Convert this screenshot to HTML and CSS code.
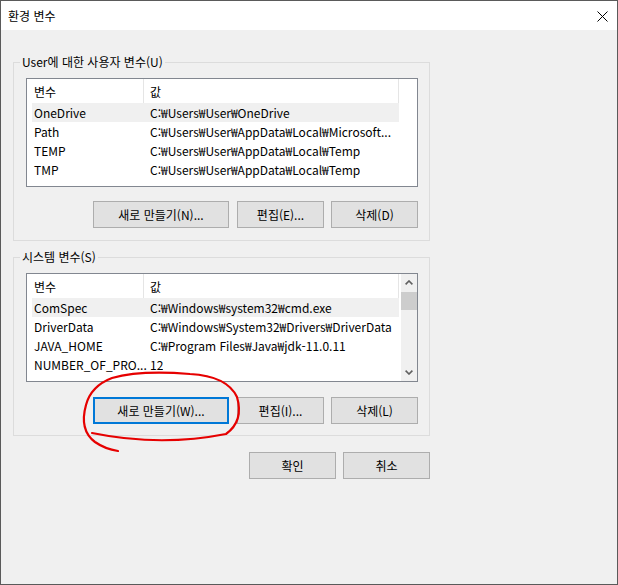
FILE: index.html
```html
<!DOCTYPE html>
<html lang="ko">
<head>
<meta charset="utf-8">
<title>환경 변수</title>
<link rel="stylesheet" href="styles.css">
</head>
<body>
<div class="window">
  <div class="titlebar">
    <span class="title">환경 변수</span>
    <svg class="close" width="11" height="11" viewBox="0 0 11 11" aria-label="닫기"><path d="M0.5 0.5 L10.5 10.5 M10.5 0.5 L0.5 10.5" stroke="#000" stroke-width="1" fill="none"/></svg>
  </div>
  <div class="content">
    <fieldset class="group group-user">
      <legend>User에 대한 사용자 변수(U)</legend>
      <div class="list">
        <div class="list-body">
          <div class="list-header">
            <div class="hcell hname">변수</div>
            <div class="hcell hvalue">값</div>
          </div>
          <div class="row selected"><span class="name">OneDrive</span><span class="value">C:₩Users₩User₩OneDrive</span></div>
          <div class="row"><span class="name">Path</span><span class="value">C:₩Users₩User₩AppData₩Local₩Microsoft...</span></div>
          <div class="row"><span class="name">TEMP</span><span class="value">C:₩Users₩User₩AppData₩Local₩Temp</span></div>
          <div class="row"><span class="name">TMP</span><span class="value">C:₩Users₩User₩AppData₩Local₩Temp</span></div>
        </div>
      </div>
      <div class="actions">
        <button class="btn btn-wide">새로 만들기(N)...</button>
        <button class="btn">편집(E)...</button>
        <button class="btn">삭제(D)</button>
      </div>
    </fieldset>

    <fieldset class="group group-sys">
      <legend>시스템 변수(S)</legend>
      <div class="list">
        <div class="list-body">
          <div class="list-header">
            <div class="hcell hname">변수</div>
            <div class="hcell hvalue">값</div>
          </div>
          <div class="row selected"><span class="name">ComSpec</span><span class="value">C:₩Windows₩system32₩cmd.exe</span></div>
          <div class="row"><span class="name">DriverData</span><span class="value">C:₩Windows₩System32₩Drivers₩DriverData</span></div>
          <div class="row"><span class="name">JAVA_HOME</span><span class="value">C:₩Program Files₩Java₩jdk-11.0.11</span></div>
          <div class="row"><span class="name">NUMBER_OF_PRO...</span><span class="value">12</span></div>
        </div>
        <div class="scrollbar">
          <div class="arrow"><svg width="8" height="5" viewBox="0 0 8 5"><path d="M0.6 4.4 L4 1 L7.4 4.4" stroke="#606060" stroke-width="1.6" fill="none"/></svg></div>
          <div class="thumb"></div>
          <div class="arrow arrow-down"><svg width="8" height="5" viewBox="0 0 8 5"><path d="M0.6 0.6 L4 4 L7.4 0.6" stroke="#606060" stroke-width="1.6" fill="none"/></svg></div>
        </div>
      </div>
      <div class="actions">
        <button class="btn btn-wide btn-default">새로 만들기(W)...</button>
        <button class="btn">편집(I)...</button>
        <button class="btn">삭제(L)</button>
      </div>
    </fieldset>

    <div class="dialog-actions">
      <button class="btn">확인</button>
      <button class="btn">취소</button>
    </div>
  </div>
</div>
<svg class="annotation" width="618" height="585" viewBox="0 0 618 585">
  <path d="M92 433 Q160 447 226 434 Q244 421 237 397 Q227 376 190 374 Q140 370 112 378 Q91 386 86 405 Q79 430 95 442 Q105 449 118 451" stroke="#e60000" stroke-width="2.2" fill="none" stroke-linecap="round"/>
</svg>
</body>
</html>
```
FILE: styles.css
```css
* { box-sizing: border-box; }
html, body { margin: 0; padding: 0; }
body {
  width: 618px;
  height: 585px;
  position: relative;
  overflow: hidden;
  font-family: "Noto Sans CJK KR", "Noto Sans", sans-serif;
  font-size: 12px;
  color: #000;
  background: #2b2b2b;
}
.window {
  width: 618px;
  height: 585px;
  border: 1px solid #5a5a5a;
  background: #f0f0f0;
  display: flex;
  flex-direction: column;
}
.titlebar {
  flex: none;
  height: 29px;
  background: #fff;
  display: flex;
  align-items: center;
  justify-content: space-between;
  padding: 0 9px 0 7px;
}
.title { line-height: 16px; }
.close { display: block; margin-top: 1px; }
.content { padding: 24px 0 0 12px; }

.group {
  margin: 0;
  min-width: 0;
  width: 417px;
  border: 1px solid #dcdcdc;
  padding: 8px 12px 12px 12px;
}
.group-sys { margin-top: 8px; padding-bottom: 11px; }
legend {
  padding: 0 2px;
  margin-left: -6px;
  line-height: 16px;
  font-size: 12px;
}

.list {
  width: 392px;
  height: 109px;
  border: 1px solid #828790;
  background: #fff;
  display: flex;
}
.list-body { width: 373px; flex: none; }
.list-header {
  display: flex;
  height: 24px;
  width: 372px;
  border-right: 1px solid #e5e5e5;
}
.hcell { line-height: 25px; white-space: nowrap; }
.hname { width: 117px; padding-left: 7px; border-right: 1px solid #e5e5e5; }
.hvalue { padding-left: 6px; }

.row {
  display: flex;
  height: 19px;
  line-height: 19px;
  margin-left: 5px;
  width: 367px;
  white-space: nowrap;
}
.row.selected { background: #f0f0f0; }
.name { width: 118px; flex: none; padding-left: 2px; overflow: hidden; }
.value { overflow: hidden; }

.scrollbar {
  width: 17px;
  margin-left: 1px;
  background: #f0f0f0;
  display: flex;
  flex-direction: column;
}
.arrow {
  height: 17px;
  display: flex;
  align-items: center;
  justify-content: center;
}
.arrow svg { display: block; }
.arrow-down { margin-top: auto; }
.thumb { height: 18px; margin-top: 1px; background: #cdcdcd; }

.actions {
  display: flex;
  justify-content: flex-end;
  gap: 7px;
  margin-top: 14px;
  width: 392px;
}
.group-sys .actions { margin-top: 15px; }
.btn {
  height: 27px;
  width: 87px;
  padding: 0;
  border: 1px solid #adadad;
  background: #e1e1e1;
  font: inherit;
  font-size: 12px;
  color: #000;
}
.btn-wide { width: 136px; margin-right: 1px; }
.btn-default { border: 2px solid #0078d7; }

.dialog-actions {
  width: 417px;
  display: flex;
  justify-content: flex-end;
  gap: 7px;
  margin-top: 16px;
}

.annotation {
  position: absolute;
  left: 0;
  top: 0;
  pointer-events: none;
}
```
